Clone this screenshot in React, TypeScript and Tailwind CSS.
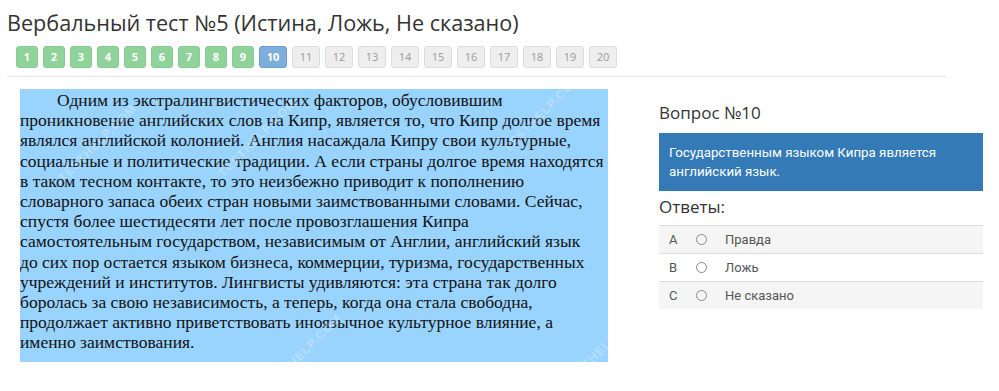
const lines = [
  "Одним из экстралингвистических факторов, обусловившим",
  "проникновение английских слов на Кипр, является то, что Кипр долгое время",
  "являлся английской колонией. Англия насаждала Кипру свои культурные,",
  "социальные и политические традиции. А если страны долгое время находятся",
  "в таком тесном контакте, то это неизбежно приводит к пополнению",
  "словарного запаса обеих стран новыми заимствованными словами. Сейчас,",
  "спустя более шестидесяти лет после провозглашения Кипра",
  "самостоятельным государством, независимым от Англии, английский язык",
  "до сих пор остается языком бизнеса, коммерции, туризма, государственных",
  "учреждений и институтов. Лингвисты удивляются: эта страна так долго",
  "боролась за свою независимость, а теперь, когда она стала свободна,",
  "продолжает активно приветствовать иноязычное культурное влияние, а",
  "именно заимствования.",
];

const answers = [
  { letter: "A", text: "Правда" },
  { letter: "B", text: "Ложь" },
  { letter: "C", text: "Не сказано" },
];

const marks = [
  { left: 25, top: 45 },
  { left: 185, top: 40 },
  { left: 470, top: 15 },
  { left: 230, top: 255 },
  { left: 530, top: 250 },
];

function QuestionButton({ n }: { n: number }) {
  const done = n < 10;
  const current = n === 10;
  return (
    <button
      className={
        "flex h-[22px] items-center justify-center rounded-[3px] border text-[11px] " +
        (n < 10 ? "w-[22px] " : "w-[28px] ") +
        (done
          ? "border-[#86cc93] bg-[#8fd39b] font-bold text-white"
          : current
            ? "border-[#6f9fd0] bg-[#7eaedb] font-bold text-white"
            : "border-[#dcdcdc] bg-[#eeeeee] text-[#999]")
      }
    >
      {n}
    </button>
  );
}

export default function App() {
  return (
    <div className="h-[391px] w-[999px] overflow-hidden bg-white font-['Open_Sans',sans-serif] text-[#333]">
      <div className="px-[7px] pt-[9px]">
        <h1 className="text-[21.6px] leading-[28px] text-[#333]">
          Вербальный тест №5 (Истина, Ложь, Не сказано)
        </h1>
        <div className="mt-[9px] flex gap-[5px] pl-[9px]">
          {Array.from({ length: 20 }, (_, i) => (
            <QuestionButton key={i} n={i + 1} />
          ))}
        </div>
        <div className="mt-[8px] mr-[46px] h-px bg-[#e5e5e5]" />
      </div>

      <div className="mt-[12px] flex pl-[20px]">
        <div className="relative w-[588px] overflow-hidden bg-[#99d3ff] pt-[1px] pb-[9px]">
          <div className="font-['Liberation_Serif',serif] text-[17.5px] leading-[20.2px] text-[#111]">
            {lines.map((line, i) => (
              <div key={i} className={"whitespace-nowrap " + (i === 0 ? "pl-[37px]" : "")}>
                {line}
              </div>
            ))}
          </div>
          {marks.map((m, i) => (
            <span
              key={i}
              className="pointer-events-none absolute -rotate-45 font-['Liberation_Sans',sans-serif] text-[12px] font-bold tracking-[1px] text-white/30"
              style={{ left: m.left, top: m.top }}
            >
              TESTHELP.COM
            </span>
          ))}
        </div>

        <div className="ml-[51px] w-[324px] pt-[12px]">
          <h2 className="text-[17px] leading-[24px] text-[#333]">Вопрос №10</h2>
          <div className="mt-[8px] bg-[#337ab7] px-[10px] pt-[10px] pb-[10px] font-['Roboto',sans-serif] text-[13.3px] leading-[19px] text-white">
            Государственным языком Кипра является английский язык.
          </div>
          <h3 className="mt-[4px] text-[17px] leading-[24px] text-[#333]">Ответы:</h3>
          <div className="mt-[6px] font-['Roboto',sans-serif] text-[13px] text-[#555]">
            {answers.map((a, i) => (
              <div
                key={a.letter}
                className={
                  "flex h-[28px] items-center border-t border-[#dddddd] " +
                  (i % 2 === 0 ? "bg-[#f5f5f5]" : "bg-white")
                }
              >
                <span className="box-content w-[12px] pl-[10px]">{a.letter}</span>
                <span className="ml-[15px] h-[11px] w-[11px] rounded-full border border-[#888]" />
                <span className="ml-[18px]">{a.text}</span>
              </div>
            ))}
          </div>
        </div>
      </div>
    </div>
  );
}
